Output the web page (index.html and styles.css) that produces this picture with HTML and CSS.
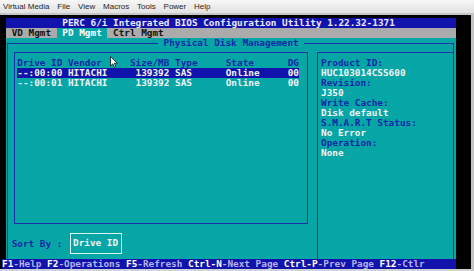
FILE: index.html
```html
<!DOCTYPE html>
<html lang="en">
<head>
    <meta charset="UTF-8">
    <title>PERC 6/i - Consola virtual</title>
    <link rel="stylesheet" href="styles.css">
</head>
<body>
    <!-- Barra de menús del visor -->
    <div class="menubar">
        <span>Virtual Media</span>
        <span>File</span>
        <span>View</span>
        <span>Macros</span>
        <span>Tools</span>
        <span>Power</span>
        <span>Help</span>
    </div>

    <div class="viewer">
        <!-- Pantalla en modo texto: 80 columnas x 25 filas -->
        <div class="screen">
            <div class="title">PERC 6/i Integrated BIOS Configuration Utility 1.22.32-1371</div>

            <div class="tabs">
                <span class="tab">VD Mgmt</span>
                <span class="tab active">PD Mgmt</span>
                <span class="tab">Ctrl Mgmt</span>
            </div>

            <div class="field"></div>
            <div class="box outer"></div>
            <div class="caption">Physical Disk Management</div>
            <div class="box list"></div>
            <div class="box info"></div>

            <!-- Lista de discos -->
            <div class="row head">Drive ID Vendor     Size/MB Type     State      DG</div>
            <div class="row drive selected">--:00:00 HITACHI     139392 SAS      Online     00</div>
            <div class="row drive second">--:00:01 HITACHI     139392 SAS      Online     00</div>

            <!-- Detalle del disco seleccionado -->
            <div class="info-line label r1">Product ID:</div>
            <div class="info-line r2">HUC103014CSS600</div>
            <div class="info-line label r3">Revision:</div>
            <div class="info-line r4">J350</div>
            <div class="info-line label r5">Write Cache:</div>
            <div class="info-line r6">Disk default</div>
            <div class="info-line label r7">S.M.A.R.T Status:</div>
            <div class="info-line r8">No Error</div>
            <div class="info-line label r9">Operation:</div>
            <div class="info-line r10">None</div>

            <div class="sort-label">Sort By :</div>
            <div class="sort-box">Drive ID</div>

            <div class="status"><b>F1</b>-Help <b>F2</b>-Operations <b>F5</b>-Refresh <b>Ctrl-N</b>-Next Page <b>Ctrl-P</b>-Prev Page <b>F12</b>-Ctlr</div>
        </div>

        <!-- Puntero del ratón -->
        <svg class="cursor" width="8" height="12" viewBox="0 0 8 12">
            <path d="M0.5 0.5 L0.5 10 L2.8 7.8 L4.4 11.2 L5.8 10.5 L4.3 7.2 L7.3 7.2 Z" fill="#fff" stroke="#111" stroke-width="0.8"/>
        </svg>
    </div>
</body>
</html>
```

FILE: styles.css
```css
/* Visor de consola remota */
body {
    margin: 0;
    width: 474px;
    height: 271px;
    overflow: hidden;
    background-color: #000;
    font-family: 'Liberation Sans', Arial, sans-serif;
}

.menubar {
    display: flex;
    gap: 7.8px;
    height: 13px;
    padding-left: 3px;
    border-bottom: 2px solid #c6c6c6;
    background: linear-gradient(#f7f7f7, #e1e1e1);
    color: #262626;
    font-size: 8px;
    line-height: 13px;
}

.viewer {
    position: relative;
    height: 251px;
    padding: 3px 0 0 6px;
    border-right: 3px solid #c4c4c4;
    border-bottom: 2px solid #d2d2d2;
    background-color: #000;
}

/* Rejilla de caracteres */
.screen {
    display: grid;
    grid-template-columns: repeat(80, 1ch);
    grid-template-rows: repeat(25, 10.04px);
    width: max-content;
    font-family: 'DejaVu Sans Mono', monospace;
    font-size: 9.37px;
    font-weight: bold;
    line-height: 10.04px;
    color: #f2f2f2;
    white-space: pre;
}

.title {
    grid-row: 1;
    grid-column: 1 / -1;
    padding-left: 10ch;
    background-color: #1212ac; /* Azul BIOS */
    color: #eaeaff;
}

.tabs {
    grid-row: 2;
    grid-column: 1 / -1;
    display: flex;
    background-color: #ababab;
    color: #111;
}
.tab {
    padding: 0 1ch;
}
.tab.active {
    background-color: #06a6a6;
    color: #fff;
}

/* Zona turquesa y marcos */
.field {
    grid-row: 3 / 25;
    grid-column: 1 / -1;
    background-color: #06a6a6; /* Turquesa */
}

.box {
    border: 1.5px solid #1830a4;
    margin: 4px 2px 5px;
}
.box.outer {
    grid-row: 3 / 25;
    grid-column: 1 / -1;
    border-bottom: none;
    margin: 5px 2px 0 1px;
}
.box.list {
    grid-row: 4 / 22;
    grid-column: 2 / 55;
}
.box.info {
    grid-row: 4 / 25;
    grid-column: 56 / -1;
    border-bottom: none;
    margin-bottom: 0;
}

.caption {
    grid-row: 3;
    grid-column: 28 / 54;
    padding: 0 1ch;
    background-color: #06a6a6;
    color: #1228a8;
    z-index: 1;
}

/* Filas de la lista de discos */
.row {
    grid-column: 3 / 53;
}
.row.head {
    grid-row: 5;
    color: #1228a8;
}
.row.selected {
    grid-row: 6;
    background-color: #1212ac;
}
.row.second {
    grid-row: 7;
}

/* Panel de detalle */
.info-line {
    grid-column: 57 / 80;
}
.info-line.label {
    color: #1228a8;
}
.r1 { grid-row: 5; }
.r2 { grid-row: 6; }
.r3 { grid-row: 7; }
.r4 { grid-row: 8; }
.r5 { grid-row: 9; }
.r6 { grid-row: 10; }
.r7 { grid-row: 11; }
.r8 { grid-row: 12; }
.r9 { grid-row: 13; }
.r10 { grid-row: 14; }

/* Ordenar por */
.sort-label {
    grid-row: 23;
    grid-column: 2 / 11;
    color: #1228a8;
}
.sort-box {
    grid-row: 22 / 25;
    grid-column: 12 / 22;
    display: flex;
    align-items: center;
    margin: 4px 2px 5px;
    padding-left: calc(1ch - 3.5px);
    border: 1.5px solid #d8f4f4;
}

/* Barra de estado */
.status {
    grid-row: 25;
    grid-column: 1 / -1;
    margin-left: -4px;
    background-color: #1212ac;
    color: #b4b4ee;
}
.status b {
    color: #fff;
}

.cursor {
    position: absolute;
    left: 110px;
    top: 41px;
}
```
